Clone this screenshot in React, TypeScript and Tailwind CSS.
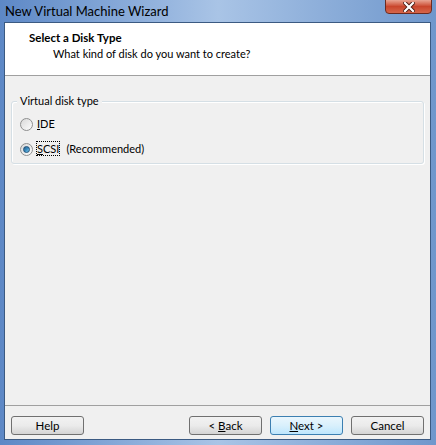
import React from 'react';

const font = { fontFamily: 'Lato, "Noto Sans", Arial, sans-serif' };

const Radio: React.FC<{ checked?: boolean }> = ({ checked }) => (
  <span className="relative inline-flex h-[13px] w-[13px] items-center justify-center rounded-full border border-[#8e8f8f] bg-gradient-to-br from-[#d9d9d9] to-[#fdfdfd]">
    {checked && (
      <span className="h-[7px] w-[7px] rounded-full border border-[#1d4f78] bg-gradient-to-br from-[#2c628b] via-[#3a8cc0] to-[#7fd0f2]" />
    )}
  </span>
);

const WinButton: React.FC<{ primary?: boolean; children: React.ReactNode }> = ({ primary, children }) => (
  <button
    className={
      primary
        ? 'h-[19px] w-[73px] rounded-[3px] border border-[#3c7fb1] bg-gradient-to-b from-[#eaf6fd] via-[#d9f0fc] to-[#bee6fd] text-[11.5px] leading-none text-black'
        : 'h-[19px] w-[73px] rounded-[3px] border border-[#707070] bg-gradient-to-b from-[#f2f2f2] via-[#ebebeb] to-[#d4d4d4] text-[11.5px] leading-none text-black'
    }
  >
    {children}
  </button>
);

export default function App() {
  return (
    <div
      className="flex h-[445px] w-[436px] flex-col bg-gradient-to-r from-[#5d88c6] via-[#a9c4e6] to-[#6f97cc]"
      style={font}
    >
      {/* title bar */}
      <div className="relative flex h-[22px] items-center pl-[5px]">
        <span className="text-[13px] leading-none text-black">New Virtual Machine Wizard</span>
        <div className="absolute right-[4px] top-[-1px] flex h-[15px] w-[47px] items-center justify-center rounded-b-[4px] border border-[#6b2a20] bg-gradient-to-b from-[#e8a493] via-[#c9452c] to-[#d6664a]">
          <svg width="12" height="10" viewBox="0 0 12 10">
            <path d="M2 1 L10 9 M10 1 L2 9" stroke="#4a1a12" strokeWidth="4" strokeLinecap="square" />
            <path d="M2 1 L10 9 M10 1 L2 9" stroke="#fff" strokeWidth="2.2" strokeLinecap="square" />
          </svg>
        </div>
      </div>

      {/* client area */}
      <div className="mb-[5px] ml-[4px] mr-[5px] flex flex-1 flex-col border border-[#3b5a82] bg-[#f0f0f0]">
        <div className="flex h-[53px] flex-col border-b border-[#a0a0a0] bg-white pl-[24px] pt-[7px]">
          <div className="text-[11.5px] font-bold leading-[16px] text-black">Select a Disk Type</div>
          <div className="pl-[24px] text-[11px] leading-[16px] text-black">What kind of disk do you want to create?</div>
        </div>

        <div className="flex flex-1 flex-col px-[6px] pt-[17px]">
          <div className="relative mt-[8px] h-[63px] rounded-[3px] border border-[#d5dfe5] shadow-[inset_1px_1px_0_#fff,1px_1px_0_#fff]">
            <span className="absolute left-[5px] top-[-9px] bg-[#f0f0f0] px-[3px] text-[11px] leading-[16px] text-black">
              Virtual disk type
            </span>
            <div className="flex flex-col gap-[11px] pl-[8px] pt-[15px]">
              <label className="flex items-center gap-[4px] text-[11px] leading-[14px] text-black">
                <Radio />
                <span>
                  <span className="underline">I</span>DE
                </span>
              </label>
              <label className="flex items-center gap-[4px] text-[11px] leading-[14px] text-black">
                <Radio checked />
                <span>
                  <span className="outline outline-1 outline-dotted outline-black">
                    <span className="underline">S</span>CSI
                  </span>
                  <span className="ml-[7px]">(Recommended)</span>
                </span>
              </label>
            </div>
          </div>

          <div className="flex-1" />

          <div className="-mx-[6px] border-t border-[#a0a0a0]" />
          <div className="flex items-center pb-[4px] pt-[10px]">
            <WinButton>Help</WinButton>
            <div className="flex-1" />
            <div className="flex gap-[8px]">
              <WinButton>
                &lt; <span className="underline">B</span>ack
              </WinButton>
              <WinButton primary>
                <span className="underline">N</span>ext &gt;
              </WinButton>
              <WinButton>Cancel</WinButton>
            </div>
          </div>
        </div>
      </div>
    </div>
  );
}
